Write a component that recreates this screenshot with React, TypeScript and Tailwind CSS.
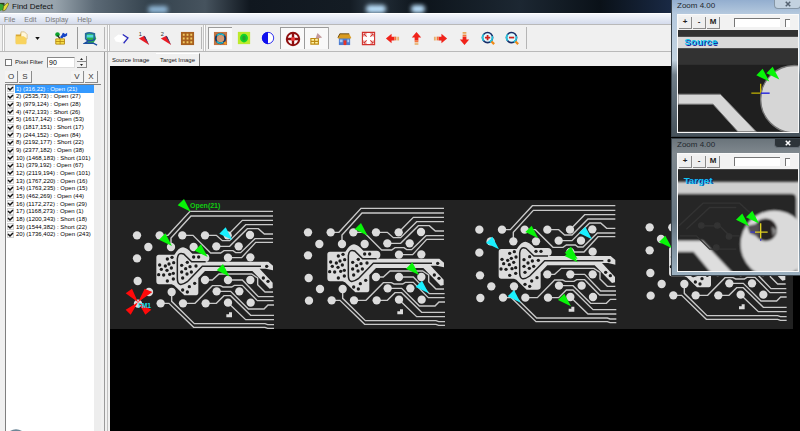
import React, { useState } from 'react';

type Point = [number, number];

const initialDefects = [
  '1) (316,22) : Open (21)',
  '2) (2535,73) : Open (27)',
  '3) (979,124) : Open (28)',
  '4) (472,133) : Short (26)',
  '5) (1617,142) : Open (53)',
  '6) (1817,151) : Short (17)',
  '7) (244,152) : Open (84)',
  '8) (2192,177) : Short (22)',
  '9) (2377,182) : Open (38)',
  '10) (1468,183) : Short (101)',
  '11) (379,192) : Open (67)',
  '12) (2119,194) : Open (101)',
  '13) (1767,220) : Open (16)',
  '14) (1763,235) : Open (15)',
  '15) (462,269) : Open (44)',
  '16) (1172,272) : Open (29)',
  '17) (1168,273) : Open (1)',
  '18) (1200,343) : Short (18)',
  '19) (1544,382) : Short (22)',
  '20) (1736,402) : Open (243)',
];

const pads: Point[] = [
  [84, 112], [152, 112], [220, 112], [288, 112], [356, 112], [423, 111],
  [118, 147], [186, 147], [254, 147], [322, 145], [389, 145],
  [84, 181], [357, 179], [424, 178],
  [86, 249], [288, 246], [357, 246], [424, 246],
  [120, 282], [188, 282], [323, 280], [391, 280],
  [87, 317], [155, 316], [222, 316], [290, 316], [357, 314], [425, 314],
];

const holes: Point[] = [
  [175, 183], [189, 178], [194, 194], [180, 198], [152, 201], [169, 204], [187, 210],
  [157, 214], [174, 217], [193, 226], [149, 230], [164, 231], [182, 229], [193, 243],
  [175, 249], [235, 193], [218, 202], [243, 206], [230, 212], [218, 222], [247, 222],
  [261, 204], [234, 228], [221, 240], [254, 177], [269, 177], [257, 256], [241, 266],
  [221, 276], [235, 282], [473, 205], [463, 240], [477, 250],
];

const traces = [
  'M152 112H177L243 40H492',
  'M186 147V120L246 54H492',
  'M356 112L400 67H492',
  'M288 112H322L340 128H362L410 80H492',
  'M322 145H362L415 92H448L466 108H492',
  'M220 112H252L305 165H335L345 158H372L380 164H395L438 122H492',
  'M357 179H398L440 133H492',
  'M288 246H310L330 228H428L446 240V260L468 282H492',
  'M357 246H400L448 296H494',
  'M222 316H258L310 263H334L342 267H368L376 262H400L445 308H494',
  'M323 280H365L418 333H465L477 321H495',
  'M290 316H322L345 293H365L425 352H495',
  'M357 314L410 365H495',
  'M188 282V310L256 377H468L476 380H495',
  'M155 316H180L254 388H468L476 391H495',
];

// the four printed copies of the same board
const copies = ['translate(-3 -6)', 'translate(510 -15)', 'translate(1024 -23)', 'translate(1535 -30)'];

const opens: Point[] = [
  [242, 35], [186, 138], [293, 171], [359, 230], [773, 107], [927, 225],
  [1285, 115], [1403, 178], [1403, 187], [1383, 319], [1686, 145],
];
const shorts: Point[] = [[367, 120], [956, 280], [1167, 148], [1446, 118], [1232, 308]];

const Marker = ({ at, color }: { at: Point; color: string }) => (
  <path d="M0 0L-39 -19L-20 -38Z" fill={color} transform={`translate(${at[0]} ${at[1]})`} />
);

const BoardStrip = () => (
  <svg viewBox="0 0 2049 387" className="block h-[129px] w-[683px] shrink-0 overflow-visible bg-[#222222]">
    <defs>
      <g id="board">
        <g fill="none" stroke="#c9c9c9" strokeWidth="4.2">
          {traces.map((d) => (
            <path key={d} d={d} />
          ))}
        </g>
        <g fill="#dcdcdc">
          {pads.map(([x, y]) => (
            <circle key={`${x}-${y}`} cx={x} cy={y} r="12.5" />
          ))}
          <path d="M150 170H196Q210 148 222 148Q232 148 250 167H288A12 12 0 0 1 290 191H478L492 203V217L470 212H452L491 254V270L482 272L430 219H288L268 240V284Q268 292 258 292H226L195 262L188 259H150Q142 259 142 250V178Q142 170 150 170Z" />
          <path d="M360 343h9v15h-17v-9h8z" />
        </g>
        <path
          d="M456 205H280L235 251Q205 272 205 240V182Q207 161 224 168L248 191H290"
          fill="none"
          stroke="#222222"
          strokeWidth="4.5"
        />
        <g fill="#1c1c1c">
          {holes.map(([x, y]) => (
            <circle key={`${x}-${y}`} cx={x} cy={y} r="5" />
          ))}
        </g>
      </g>
    </defs>
    {copies.map((t) => (
      <use key={t} href="#board" transform={t} />
    ))}
    <path
      d="M84 307L47 280L66 266ZM84 307L104 266L127 276ZM84 307L47 329L62 344ZM84 307L106 344L124 329Z"
      fill="#ff0a0a"
    />
    <text x="83" y="323" fontSize="20" fontWeight="700" fill="#19e5f2" fontFamily="Liberation Sans, sans-serif">
      FM1
    </text>
    {shorts.map((p) => (
      <Marker key={p.join()} at={p} color="#19f0ff" />
    ))}
    {opens.map((p) => (
      <Marker key={p.join()} at={p} color="#08f508" />
    ))}
    <text x="240" y="24" fontSize="21" fontWeight="700" fill="#10cf10" fontFamily="Liberation Sans, sans-serif">
      Open(21)
    </text>
  </svg>
);

const SourceView = () => (
  <svg viewBox="55 93 360 305" className="block h-[102px] w-[120px]">
    <rect x="55" y="93" width="360" height="305" fill="#1f1f1f" />
    <rect x="55" y="93" width="360" height="104" fill="#323232" />
    <rect x="55" y="113" width="360" height="34" fill="#d9d9d9" />
    <path d="M55 285H182L290 398H235L160 315H55Z" fill="#d6d6d6" stroke="#777" strokeWidth="3" />
    <circle cx="404" cy="300" r="101" fill="#d6d6d6" stroke="#777" strokeWidth="4" />
    <Marker at={[329, 247]} color="#08f508" />
    <Marker at={[359, 241]} color="#08f508" />
    <path d="M303 254V282M275 282H303" stroke="#c4b400" strokeWidth="4" />
    <path d="M303 282H330" stroke="#1a1ae0" strokeWidth="4" />
    <g fontSize="29" fontWeight="700" fontFamily="Liberation Sans, sans-serif">
      <text x="77" y="140" fill="#16169a">Source</text>
      <text x="74" y="138" fill="#12c8f0">Source</text>
    </g>
  </svg>
);

const TargetView = () => (
  <svg viewBox="55 120 360 305" className="block h-[102px] w-[120px]">
    <defs>
      <filter id="soft">
        <feGaussianBlur stdDeviation="3" />
      </filter>
    </defs>
    <rect x="55" y="120" width="360" height="305" fill="#262626" />
    <g filter="url(#soft)">
      <rect x="45" y="158" width="380" height="50" fill="#cfcfcf" />
      <path d="M45 194H395Q410 194 410 210V435H45Z" fill="#252525" />
      <rect x="410" y="158" width="20" height="280" fill="#cfcfcf" />
      <path d="M45 335H128L222 435H158L102 368H45Z" fill="#dedede" />
      <circle cx="344" cy="345" r="101" fill="#dadada" />
      <circle cx="318" cy="302" r="34" fill="#262222" />
      <path d="M262 290L300 282V325L270 312Z" fill="#554f55" />
      <path d="M336 292L352 304L340 322Z" fill="#8c8c8c" />
    </g>
    <g fill="none" stroke="#333333" strokeWidth="4">
      <path d="M58 290L130 222H240L270 250M80 300L150 235H230M130 290H180L210 320H240M60 320H110L150 360H230" />
      <circle cx="125" cy="289" r="8" fill="#333333" />
      <circle cx="173" cy="289" r="8" fill="#333333" />
      <circle cx="208" cy="322" r="8" fill="#333333" />
      <circle cx="170" cy="355" r="8" fill="#333333" />
    </g>
    <Marker at={[268, 291]} color="#08f508" />
    <Marker at={[298, 283]} color="#08f508" />
    <path d="M272 309H288M303 325V335" stroke="#3a3ad0" strokeWidth="4" />
    <path d="M303 282V328M286 309H324" stroke="#e0d020" strokeWidth="4" />
    <g fontSize="29" fontWeight="700" fontFamily="Liberation Sans, sans-serif">
      <text x="75" y="166" fill="#16169a">Target</text>
      <text x="72" y="164" fill="#12c8f0">Target</text>
    </g>
  </svg>
);

type ZoomWindowProps = { frame: string; close: string; label: string; children: React.ReactNode };

const ZoomWindow = ({ frame, close, label, children }: ZoomWindowProps) => (
  <section aria-label={label} className={`w-[131px] overflow-hidden border border-[#3a444c] pb-[3px] pl-[5px] ${frame}`}>
    <header className="flex h-[14px] items-start justify-between">
      <h2 className="text-[8px] leading-[12px] text-[#22282e]">Zoom 4.00</h2>
      <button
        aria-label="Close"
        className={`flex h-[9px] w-[27px] items-center justify-center rounded-b-sm border border-t-0 ${close}`}
      >
        <svg viewBox="0 0 8 8" className="size-[6px]">
          <path d="M1 1L7 7M7 1L1 7" stroke="currentColor" strokeWidth="2" />
        </svg>
      </button>
    </header>
    <div className="w-[122px] border border-[#fafafa] bg-[#f2f2f2]">
      <div className="flex h-[15px] items-center gap-px pl-px text-[8px] font-bold leading-none text-[#222]">
        {['+', '-', 'M'].map((t) => (
          <button key={t} className="h-3 w-[13px] border-b border-r border-[#8a8a8a] bg-[#efefef]">
            {t}
          </button>
        ))}
        <input
          aria-label={`${label} level`}
          className="ml-[13px] h-[9px] w-[46px] border-l border-t border-[#777] bg-white"
        />
        <input
          type="checkbox"
          aria-label={`${label} lock`}
          className="ml-1 h-2 w-[5px] appearance-none border-l border-t border-[#777] bg-white"
        />
      </div>
      {children}
    </div>
  </section>
);

const icons = {
  folder: (
    <svg viewBox="0 0 16 16" className="size-[14px]">
      <path d="M2 4h5l1-2h4l2 3v9H2z" fill="#d9a832" />
      <path d="M8 1h4l3 3v5H8z" fill="#fff7da" stroke="#c9a24a" strokeWidth=".6" />
      <path d="M2 6h9l3 2v7H2z" fill="#f8d35e" />
    </svg>
  ),
  wrench: (
    <svg viewBox="0 0 16 16" className="size-[14px]">
      <circle cx="4" cy="4" r="2.6" fill="#0ba32c" />
      <path d="M4 5L7 9" stroke="#222" strokeWidth="1.5" />
      <path d="M8 8L12 3" stroke="#1746c7" strokeWidth="3" />
      <path d="M10 2l2 2 3-2v3l-3 2-3-1z" fill="#1746c7" />
      <path d="M2 9h10v6H2z" fill="#f6dd48" stroke="#b78a12" />
      <path d="M7 9v6M2 12h10" stroke="#b78a12" />
    </svg>
  ),
  scan: (
    <svg viewBox="0 0 16 16" className="size-[15px]">
      <path d="M3 3l9-1 2 6-3 5H5z" fill="#2bb24a" />
      <path d="M3 9V3Q6 1 12 3V9" fill="none" stroke="#256b9b" strokeWidth="2" />
      <path d="M4 4h7v3H4z" fill="#4ed6df" />
      <path d="M3 9q4 3 10 0M5 11l-3 2h9l4 2" fill="none" stroke="#1c4fa0" strokeWidth="1.6" />
    </svg>
  ),
  chevron: (
    <svg viewBox="0 0 20 16" className="h-[14px] w-[18px]">
      <path d="M2 8l5-4 6 1 2 4-5 4-6-1z" fill="#fff" />
      <path d="M12 4l6 4-5 6" fill="none" stroke="#2727bd" strokeWidth="1.4" />
    </svg>
  ),
  grid: (
    <svg viewBox="0 0 16 16" className="size-[15px]">
      <path d="M1 1h14v14H1z" fill="#a8601f" />
      <path d="M3 4h10M3 8h10M3 12h10" stroke="#f0c860" strokeWidth="2" strokeDasharray="2 2" />
    </svg>
  ),
  ring: (
    <svg viewBox="0 0 16 16" className="size-[15px]">
      <path d="M1 1h14v14H1z" fill="#c47443" />
      <circle cx="8" cy="8" r="5" fill="#d59a76" stroke="#123a66" strokeWidth="2" />
      <path d="M4 5a5 5 0 0 1 8 0M4 11a5 5 0 0 0 7 1" fill="none" stroke="#25c5d2" strokeWidth="1.3" />
      <path d="M12 12l2 2" stroke="#f39a1c" strokeWidth="2" />
    </svg>
  ),
  green: (
    <svg viewBox="0 0 16 16" className="size-[14px]">
      <path d="M1 1h14v14H1z" fill="#bdea2c" />
      <ellipse cx="8" cy="8" rx="4.5" ry="5" fill="#12d32a" />
      <ellipse cx="8" cy="8" rx="2" ry="3" fill="#27a52d" />
    </svg>
  ),
  contrast: (
    <svg viewBox="0 0 16 16" className="size-[14px]">
      <circle cx="8" cy="8" r="6.5" fill="#fff" stroke="#1a1aee" />
      <path d="M8 1a7 7 0 0 0 0 14z" fill="#1010ee" />
    </svg>
  ),
  target: (
    <svg viewBox="0 0 16 16" className="size-[16px]">
      <circle cx="8" cy="8" r="6.2" fill="#fff" stroke="#8f1010" strokeWidth="2" />
      <path d="M8 1v14M1 8h14" stroke="#8f1010" strokeWidth="2.4" />
      <circle cx="8" cy="8" r="2" fill="#ee3a3a" />
    </svg>
  ),
  pick: (
    <svg viewBox="0 0 16 16" className="size-[15px]">
      <path d="M2 8h8v6H2zM6 8v6M2 11h8" fill="#fff3a6" stroke="#bd8a12" strokeWidth="1.2" />
      <path d="M7 8l2-6 5 5-5 1z" fill="#c39a9c" />
    </svg>
  ),
  home: (
    <svg viewBox="0 0 16 16" className="size-[15px]">
      <path d="M2 7h12v8H2z" fill="#4a7bd0" />
      <path d="M3 9h3v3H3zM11 9h2v3h-2z" fill="#a9cdf8" />
      <path d="M7 10h3v5H7z" fill="#e83324" />
      <path d="M1 7l2-4h10l2 4v1H1z" fill="#d99b20" />
      <path d="M1 7l2-4h10" fill="none" stroke="#6b4a10" />
    </svg>
  ),
  fit: (
    <svg viewBox="0 0 16 16" className="size-[15px]">
      <path d="M1.500 1.500h13v13h-13z" fill="#fff" stroke="#d2322d" strokeWidth="1.2" />
      <path d="M3 3l3 3M13 3l-3 3M3 13l3-3M13 13l-3-3" stroke="#d2322d" strokeWidth="1.2" />
      <path d="M3 6V3h3M10 3h3v3M13 10v3h-3M6 13H3v-3" fill="none" stroke="#d2322d" strokeWidth=".8" />
    </svg>
  ),
};

const Pin = ({ digit }: { digit: string }) => (
  <svg viewBox="0 0 16 16" className="size-[15px]">
    <text x="3" y="5" fontSize="6" fill="#333" fontFamily="Liberation Sans, sans-serif">{digit}</text>
    <path d="M3 8l6-3 5 10z" fill="#ec1c24" />
    <path d="M8 5l2 1 4 9z" fill="#24306e" />
  </svg>
);

const Arrow = ({ turn }: { turn: number }) => (
  <svg viewBox="0 0 16 16" className="size-[15px]">
    <g transform={`rotate(${turn} 8 8)`}>
      <path d="M1 8l6-5v3h3v4H7v3z" fill="#f0231a" />
      <path d="M10 6h2v4h-2z" fill="#f5733c" />
      <path d="M12.500 6h1v4h-1zM14 6h1v4h-1z" fill="#e7a95c" />
    </g>
  </svg>
);

const Magnifier = ({ plus }: { plus?: boolean }) => (
  <svg viewBox="0 0 16 16" className="size-[14px]">
    <circle cx="7.5" cy="7.5" r="5.8" fill="#e3fbff" stroke="#162d68" strokeWidth="1.8" />
    <path d="M3 11A5.500 5.500 0 0 1 3 4M10 12.500A5.500 5.500 0 0 0 12.700 6" fill="none" stroke="#24c8e0" strokeWidth="1.8" />
    <path d={plus ? 'M4.500 7.500h6M7.500 4.500v6' : 'M4.500 7.500h6'} stroke="#d0211c" strokeWidth="2" />
    <path d="M12 12l3 3" stroke="#f08a16" strokeWidth="2.6" />
  </svg>
);

type ToolProps = { label: string; pressed?: boolean; narrow?: boolean; children: React.ReactNode };

const Tool = ({ label, pressed, narrow, children }: ToolProps) => (
  <button
    aria-label={label}
    className={`flex h-[22px] shrink-0 items-center justify-center ${narrow ? 'w-[22px]' : 'w-6'} ${
      pressed ? 'border-l border-t border-[#9b9b9b] bg-[#f9f9f9]' : ''
    }`}
  >
    {children}
  </button>
);

const Grip = () => <span className="h-[26px] w-[3px] shrink-0 border-l border-r border-[#c4c4c4] bg-white" />;

const Toolbar = () => (
  <div className="flex h-7 shrink-0 items-center overflow-hidden border-b border-t border-[#b9b9b9] bg-[#f0f0f0] pl-[2px]">
    <Grip />
    <div className="flex w-[100px] shrink-0 items-center border-r border-[#b5b5b5] pl-[5px]">
      <Tool label="Open file" narrow>{icons.folder}</Tool>
      <button aria-label="Recent files" className="flex h-[22px] w-[10px] items-center justify-center">
        <svg viewBox="0 0 6 4" className="h-[3px] w-[5px]">
          <path d="M0 0h6L3 4z" fill="#111" />
        </svg>
      </button>
      <span className="w-2" />
      <Tool label="Settings" narrow>{icons.wrench}</Tool>
      <span className="h-[22px] w-[6px] border-r border-[#999]" />
      <Tool label="Inspect">{icons.scan}</Tool>
    </div>
    <span className="w-[2px] shrink-0" />
    <Grip />
    <div className="flex w-[92px] shrink-0 border-r border-[#b5b5b5]">
      <Tool label="Next" narrow>{icons.chevron}</Tool>
      <Tool label="Pin 1" narrow><Pin digit="1" /></Tool>
      <Tool label="Pin 2" narrow><Pin digit="2" /></Tool>
      <Tool label="Grid" narrow>{icons.grid}</Tool>
    </div>
    <span className="w-[1px] shrink-0" />
    <Grip />
    <span className="w-[2px] shrink-0" />
    <div className="flex w-[319px] shrink-0 border-r border-[#b5b5b5]">
      <Tool label="Ring" pressed>{icons.ring}</Tool>
      <Tool label="Blob">{icons.green}</Tool>
      <Tool label="Contrast">{icons.contrast}</Tool>
      <Tool label="Crosshair" pressed>{icons.target}</Tool>
      <Tool label="Pick" pressed>{icons.pick}</Tool>
      <span className="w-1 border-l border-[#aaa]" />
      <Tool label="Home">{icons.home}</Tool>
      <Tool label="Fit">{icons.fit}</Tool>
      <Tool label="Left"><Arrow turn={0} /></Tool>
      <Tool label="Up"><Arrow turn={90} /></Tool>
      <Tool label="Right"><Arrow turn={180} /></Tool>
      <Tool label="Down"><Arrow turn={270} /></Tool>
      <Tool label="Zoom in"><Magnifier plus /></Tool>
      <Tool label="Zoom out"><Magnifier /></Tool>
    </div>
  </div>
);

const SmallButton = ({ children }: { children: string }) => (
  <button className="h-3 w-[13px] border-b border-r border-[#8c8c8c] bg-[#f4f4f4] text-[8px] leading-none text-[#333]">
    {children}
  </button>
);

const DefectPanel = () => {
  const [filter, setFilter] = useState('90');
  const [checked, setChecked] = useState(initialDefects.map(() => true));

  const toggle = (index: number) => setChecked(checked.map((c, i) => (i === index ? !c : c)));

  return (
    <aside className="flex w-[105px] shrink-0 flex-col border-r border-[#9a9a9a] pl-[5px] pr-[3px]">
      <div className="flex h-[18px] items-center pt-[2px]">
        <label className="flex w-[42px] items-center gap-[3px] whitespace-nowrap text-[6px] leading-[8px] text-[#111]">
          <input type="checkbox" className="size-[7px] appearance-none border border-[#777] bg-white" />
          Pixel Filter
        </label>
        <input
          aria-label="Pixel filter value"
          value={filter}
          onChange={(e) => setFilter(e.target.value)}
          className="h-[11px] w-7 border border-[#888] border-b-[#ddd] border-r-[#ddd] bg-white pl-px text-[7px] leading-none"
        />
        <div className="ml-[2px] flex flex-col">
          {['M0 4h6L3 0z', 'M0 0h6L3 4z'].map((d, i) => (
            <button
              key={d}
              aria-label={i === 0 ? 'Increase' : 'Decrease'}
              className="flex h-[6px] w-[10px] items-center justify-center border-b border-r border-[#888] bg-[#f2f2f2]"
            >
              <svg viewBox="0 0 6 4" className="h-[2px] w-[3px]">
                <path d={d} fill="#222" />
              </svg>
            </button>
          ))}
        </div>
      </div>
      <div className="flex gap-px pb-px pr-[3px] pt-px">
        <SmallButton>O</SmallButton>
        <SmallButton>S</SmallButton>
        <span className="flex-1" />
        <SmallButton>V</SmallButton>
        <SmallButton>X</SmallButton>
      </div>
      <div className="flex-1 overflow-hidden border-l border-t border-[#7f7f7f] bg-[#ededed] pr-[7px]">
        <div className="flex h-full flex-col justify-between bg-white">
          <ul className="grid h-[153px] auto-rows-fr">
            {initialDefects.map((defect, i) => (
              <li key={defect} className="flex min-h-0">
                <label className="flex flex-1 items-center gap-px whitespace-nowrap text-[6px] leading-[8px]">
                  <span className="grid shrink-0 pl-px">
                    <input
                      type="checkbox"
                      checked={checked[i]}
                      onChange={() => toggle(i)}
                      className="size-[7px] appearance-none border border-[#cfcfcf] bg-[#f6f6f6] [grid-area:1/1]"
                    />
                    {checked[i] && (
                      <svg viewBox="0 0 7 7" className="pointer-events-none size-[7px] [grid-area:1/1]">
                        <path d="M1 3L3 5L6 2" fill="none" stroke="#111" strokeWidth="1.5" />
                      </svg>
                    )}
                  </span>
                  <span className={`flex-1 pl-px ${i === 0 ? 'bg-[#3399ff] text-white' : 'text-black'}`}>
                    {defect}
                  </span>
                </label>
              </li>
            ))}
          </ul>
          <svg viewBox="0 0 12 2" className="ml-1 h-[2px] w-3">
            <path d="M0 2Q6 -1.500 12 2z" fill="#6d8797" />
          </svg>
        </div>
      </div>
    </aside>
  );
};

const App = () => {
  return (
    <div className="relative flex h-screen flex-col overflow-hidden bg-[#f0f0f0] font-['Liberation_Sans',Arial,sans-serif]">
      <header className="flex h-[13px] shrink-0 items-center gap-[3px] overflow-hidden bg-[linear-gradient(90deg,#a9b3bb_0px,#98a4ad_55px,#5b6975_95px,#34424d_150px,#46535e_205px,#10171f_250px,#141c24_350px,#26323d_370px,#0d141b_420px,#1c2732_520px,#0a1118_600px,#1b2c4a_680px)]">
        <svg viewBox="0 0 10 12" className="h-[11px] w-[9px]">
          <path d="M0 2h5v8H0z" fill="#2a3b1a" />
          <path d="M0 3l4 1v5l-4 2z" fill="#35a833" />
          <path d="M4 6l4-4 2 1-4 7-3 1z" fill="#e8dc38" stroke="#4b4a10" strokeWidth=".6" />
        </svg>
        <h1 className="text-[8px] leading-none text-[#111]">Find Defect</h1>
        <span className="ml-[92px] h-[7px] w-5 self-end rounded-full bg-[#8fb6d6] blur-[2px]" />
        <span className="ml-[195px] h-[8px] w-5 self-end rounded-full bg-[#b9defa] blur-[2px]" />
        <span className="ml-[22px] h-[8px] w-[14px] self-end rounded-full bg-[#b9defa] blur-[2px]" />
      </header>
      <nav className="flex h-[11px] shrink-0 items-center gap-[9px] border-t border-white bg-gradient-to-b from-[#f3f6fb] to-[#d5dcec] pl-1 text-[7px] leading-none text-[#777]">
        {['File', 'Edit', 'Display', 'Help'].map((item) => (
          <a key={item} href="#">
            {item}
          </a>
        ))}
      </nav>
      <Toolbar />
      <div className="flex min-h-0 flex-1">
        <DefectPanel />
        <main className="ml-[2px] flex min-w-0 flex-1 flex-col border-l border-[#c0c0c0]">
          <div className="flex h-[14px] shrink-0 items-end pl-[4px] text-[6px] leading-[12px] text-[#111]">
            <button className="w-[44px] text-left">Source Image</button>
            <button className="h-[13px] w-[44px] border-r border-t border-r-[#777] border-t-white pb-px">Target Image</button>
          </div>
          <div className="ml-[2px] flex flex-1 items-start overflow-hidden bg-black pt-[134px]">
            <BoardStrip />
          </div>
        </main>
      </div>
      <div className="absolute -right-[2px] top-0 flex flex-col gap-px">
        <ZoomWindow
          label="Source zoom"
          frame="bg-[linear-gradient(180deg,#93aecf_0px,#b5c9de_14px,#c3d3e0_60px,#6f7d88_75px,#46525b_100%)] border-t-0"
          close="border-[#8596a6] bg-[#c3d2e0] text-[#556270]"
        >
          <SourceView />
        </ZoomWindow>
        <ZoomWindow
          label="Target zoom"
          frame="bg-[linear-gradient(180deg,#6a747b_0px,#7f888e_14px,#667581_80px,#9bb0c0_100%)]"
          close="border-[#687078] bg-[#2d3439] text-white"
        >
          <TargetView />
        </ZoomWindow>
      </div>
    </div>
  );
};

export default App;
